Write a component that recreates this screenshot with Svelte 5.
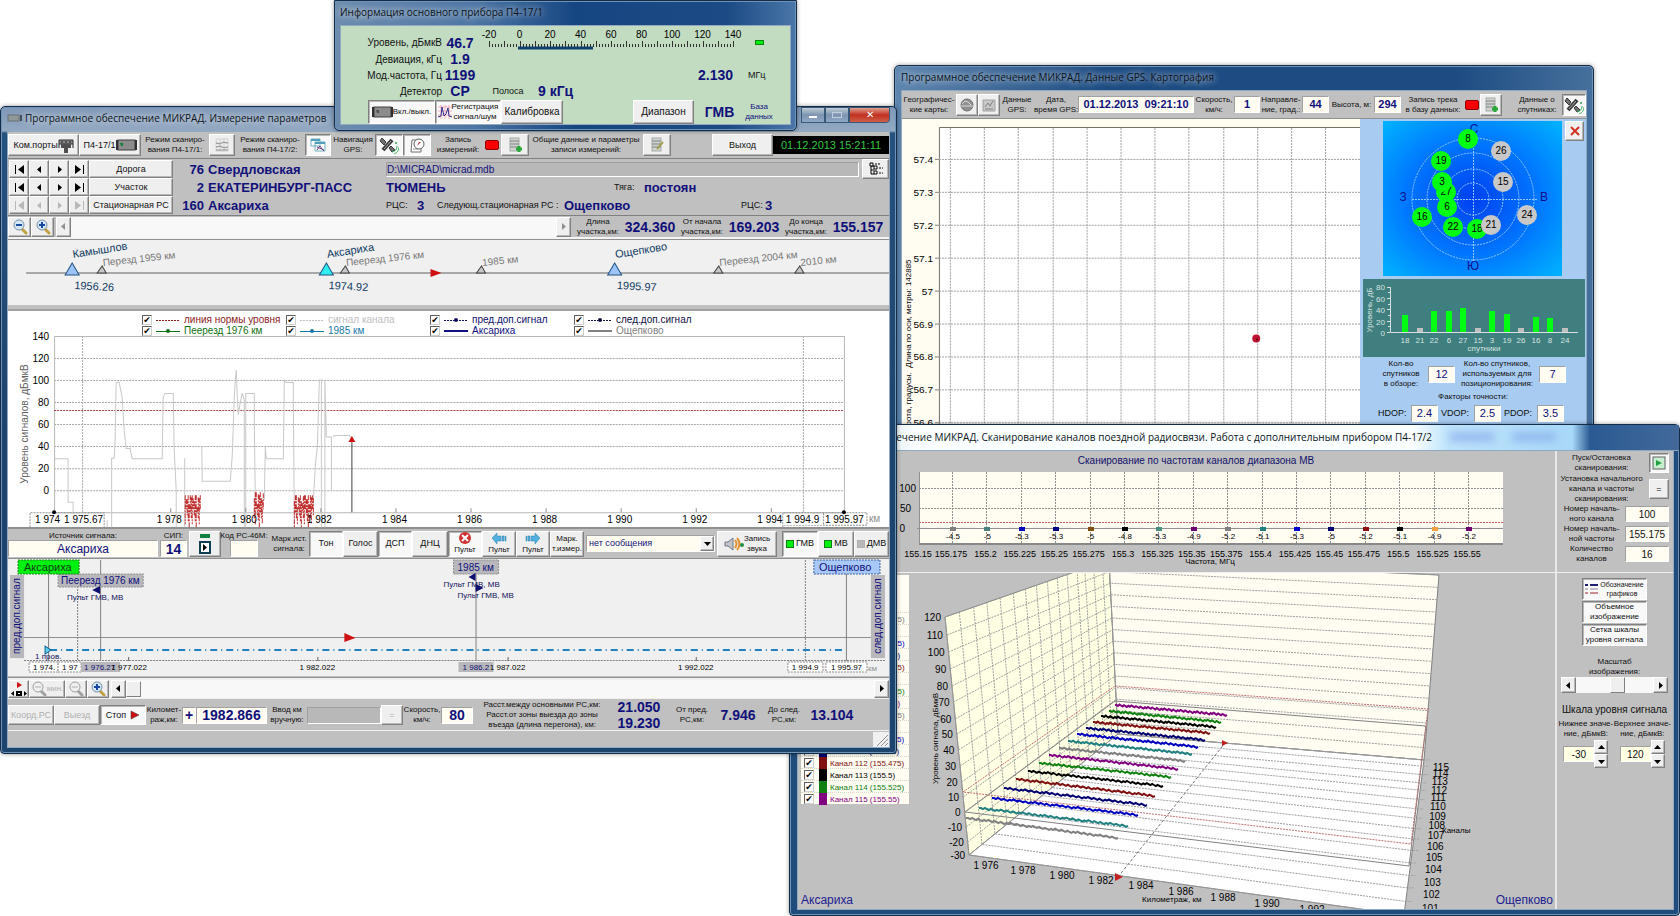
<script lang="ts">
  type Point = readonly [number, number];

  const lerp = (a: number, b: number, t: number) => a + (b - a) * t;

  // track overview
  const stations = [
    {x: 72, name: 'Камышлов', km: '1956.26', fill: '#9cc4f8'},
    {x: 326, name: 'Аксариха', km: '1974.92', fill: '#2ff0f0'},
    {x: 614, name: 'Ощепково', km: '1995.97', fill: '#9cc4f8'},
  ];
  const crossings = [
    {x: 102, name: 'Перезд 1959 км'},
    {x: 345, name: 'Пеерезд 1976 км'},
    {x: 481, name: '1985 км'},
    {x: 718, name: 'Переезд 2004 км'},
    {x: 799, name: '2010 км'},
  ];

  // level chart
  const legend = [
    {name: 'линия нормы уровня', color: '#8b1a1a', dash: '2 1', width: 1, dot: false},
    {name: 'сигнал канала', color: '#c0c0c0', dash: '2 1', width: 1, dot: false},
    {name: 'пред.доп.сигнал', color: '#10106a', dash: '2 1', width: 1, dot: true},
    {name: 'след.доп.сигнал', color: '#101040', dash: '2 1', width: 1, dot: true},
    {name: 'Пеерезд 1976 км', color: '#107010', dash: '', width: 1, dot: true},
    {name: '1985 км', color: '#1878a8', dash: '', width: 1, dot: true},
    {name: 'Аксариха', color: '#101080', dash: '', width: 2, dot: false},
    {name: 'Ощепково', color: '#808080', dash: '', width: 2, dot: false},
  ];
  const levels = [140, 120, 100, 80, 60, 40, 20, 0];
  const kmTicks = [1978, 1980, 1982, 1984, 1986, 1988, 1990, 1992, 1994];
  const signal =
    'M54 458.5H68V502H73V512 M107 520V527 M111.5 527V458H114L115 440L116 382.5H119L122 397L124 430L126 448.5H130L132 458.5H162L163 397L165 393.5H173L174 450L176 490V527 M184.5 527V458 M201.5 446L202 481H230L232 455L234 397L235 380L236 370L237 397L238 415L240 402L242 393L244 400V527 M245.5 527V393.5H254V420L255 500 M264 500L265 447L266 458.5H283L284 380L286 382.5H293V400L294 527 M313 500L315 465L317 447L319 380H321V527 M324.5 527V380L326 437H331V490 M333 437L334 435.5H349L351 438';
  const bursts = [
    {from: 185, to: 200, top: 495},
    {from: 254, to: 263, top: 492},
    {from: 294, to: 313, top: 495},
  ].map(({from, to, top}) => {
    let d = '';
    for (let x = from; x <= to; x += 1) {
      d += `M${x} ${top + ((x * 7) % 5) * ((x * 3) % 4)}V${527 - ((x * 5) % 7) * 3}`;
    }
    return d;
  });

  // GPS window
  const latitudes = ['57.4', '57.3', '57.2', '57.1', '57', '56.9', '56.8', '56.7', '56.6'];
  const satellites = [
    {id: 8, x: 1468, y: 139, used: true},
    {id: 26, x: 1501, y: 151, used: false},
    {id: 19, x: 1441, y: 161, used: true},
    {id: 27, x: 1446, y: 192, used: true},
    {id: 3, x: 1442, y: 182, used: true},
    {id: 15, x: 1503, y: 182, used: false},
    {id: 6, x: 1447, y: 207, used: true},
    {id: 16, x: 1422, y: 217, used: true},
    {id: 22, x: 1453, y: 227, used: true},
    {id: 18, x: 1477, y: 229, used: true},
    {id: 21, x: 1491, y: 225, used: false},
    {id: 24, x: 1527, y: 215, used: false},
  ];
  const bars = [
    [18, 17], [21, 4], [22, 21], [6, 21], [27, 24], [15, 4],
    [3, 21], [19, 18], [26, 4], [16, 15], [8, 14], [24, 4],
  ];

  // scan window
  const scan = [
    ['-4.5', '#808080'], ['-5', '#4a8080'], ['-5.3', '#0000c0'], ['-5.3', '#000080'],
    ['-5', '#805010'], ['-4.8', '#000'], ['-5.3', '#4a9080'], ['-4.9', '#700070'],
    ['-5.2', '#808080'], ['-5.1', '#208080'], ['-5.3', '#0000d0'], ['-5', '#000070'],
    ['-5.2', '#901010'], ['-5.1', '#000'], ['-4.9', '#f0a040'], ['-5.2', '#700070'],
  ];
  const palette = ['#808080', '#208080', '#0000c0', '#000070', '#801010', '#000', '#108010', '#800080'];
  const channels = Array.from({length: 16}, (_, i) => ({
    id: 100 + i,
    freq: (155175 + i * 25) / 1000,
    color: palette[i % 8],
  }));
  const starts: Point[] = [
    [965, 816], [978, 806], [991, 796], [1003, 786], [1015, 777], [1027, 769], [1038, 761], [1048, 753],
    [1058, 746], [1067, 739], [1076, 732], [1085, 726], [1092, 720], [1100, 714], [1108, 709], [1114, 703],
  ];
  const ends: Point[] = [
    [1117, 836], [1127, 824], [1137, 813], [1146, 803], [1154, 794], [1162, 784], [1170, 775], [1177, 767],
    [1184, 759], [1191, 752], [1197, 745], [1204, 738], [1209, 731], [1215, 725], [1220, 720], [1226, 713],
  ];
  const depth = starts.map(([x]) => (x - 965) / 149);
  const scaleY = [615, 633, 650, 667, 684, 700, 717, 732, 748, 764, 780, 795, 810, 825, 840, 853];
  const steps = scaleY.map((y, i) => {
    const t = i / 15;
    return {
      level: 120 - i * 10,
      front: [lerp(944, 968, (y - 615) / 238), y],
      back: [lerp(1108, 1117, t), lerp(558, 732, t)],
      right: [lerp(1438, 1423, t), lerp(573, 758, t)],
    };
  });
  const noisy = ([x1, y1]: Point, [x2, y2]: Point) => {
    let d = `M${x1} ${y1}`;
    for (let i = 1; i < 75; i += 1) {
      const t = i / 75;
      d += `L${lerp(x1, x2, t).toFixed(1)} ${(lerp(y1, y2, t) + (((i * 37) % 11) - 5) / 5).toFixed(1)}`;
    }
    return d + `L${x2} ${y2}`;
  };
  const kmAxis: [string, number, number][] = [
    ['1 976', 985, 867], ['1 978', 1022, 872], ['1 980', 1061, 877], ['1 982', 1100, 882],
    ['1 984', 1140, 887], ['1 986', 1180, 893], ['1 988', 1222, 899], ['1 990', 1266, 905], ['1 992', 1311, 911],
  ];
  const navRows = ['Дорога', 'Участок', 'Стационарная РС'];
</script>

{#snippet lens(sign: string, muted: boolean)}
  <svg class="icon" width="16" height="16" viewBox="0 0 16 16" aria-hidden="true">
    <path d="M10 10l4 4" stroke={muted ? '#a0a0a0' : '#c0a040'} stroke-width="3" stroke-linecap="round" />
    <circle cx="7" cy="6" r="5" fill={muted ? '#f0f0f0' : '#d4e8f8'} stroke={muted ? '#a0a0a0' : '#7890a8'} />
    <path d={sign === '+' ? 'M4 6h6M7 3v6' : 'M4 6h6'} stroke={muted ? '#b0b0b0' : '#1848a0'} stroke-width={muted ? 1 : 2} />
  </svg>
{/snippet}

{#snippet satellite()}
  <svg class="icon" width="20" height="18" viewBox="0 0 20 18" aria-hidden="true">
    <path d="M3 2l4 4-2 3-4-4zM12 10l4 4-3 2-3-4z" fill="#707070" stroke="#383838" />
    <path d="M4 14l9-10" stroke="#383838" stroke-width="4" />
    <path d="M5 13l7-8" stroke="#b0b0b0" />
    <path d="M13 16q5-1 5-6M15 18q5-2 5-7" fill="none" stroke="#40b060" />
    <circle cx="17" cy="7" r="1" fill="#30a050" />
  </svg>
{/snippet}

{#snippet database(mark: string)}
  <svg class="icon" width="16" height="18" viewBox="0 0 16 18" aria-hidden="true">
    <rect x="3" y="2" width="9" height="13" fill="#d0d4d0" stroke="#a8aca8" />
    <path d="M3 5h9M3 8h9M3 11h9" stroke="#808480" />
    {#if mark === 'add'}
      <path d="M12 10v6M9 13h6" stroke="#28a838" stroke-width="3" />
    {:else}
      <path d="M8 13l6-7" stroke="#a0a050" stroke-width="2" />
    {/if}
  </svg>
{/snippet}

{#snippet device(color: string)}
  <svg class="icon" width="21" height="12" viewBox="0 0 21 12" aria-hidden="true">
    <rect x="2" y="1" width="17" height="10" fill="#8c8c8c" stroke="#404040" />
    <path d="M1 1v10M20 1v10" stroke="#303030" stroke-width="2" />
    <path d="M4 4h3v3h-2z" fill={color} />
  </svg>
{/snippet}

{#snippet arrow(dir: string, color: string = '#000')}
  <svg class="icon" width="9" height="9" viewBox="0 0 9 9" aria-hidden="true">
    <path
      fill={color}
      d={{left: 'M6 1v7L2 4.5z', right: 'M3 1v7L7 4.5z', up: 'M1 6h7L4.5 2z', down: 'M1 3h7L4.5 7z', first: 'M0 0h1v9H0zM9 0v9L3 4.5z', last: 'M8 0h1v9H8zM0 0v9L6 4.5z'}[dir]}
    />
  </svg>
{/snippet}

<main class="desktop">
  <section class="window gps" aria-label="Картография">
    <header class="title"><h1>Программное обеспечение МИКРАД. Данные GPS. Картография</h1></header>
    <div class="client">
      <div class="gps-bar">
        <span class="cap">Географичес-<br />кие карты:</span>
        <button class="btn" aria-label="Карта мира">
          <svg class="icon" width="16" height="16" viewBox="0 0 16 16" aria-hidden="true">
            <circle cx="8" cy="8" r="6" fill="#909090" stroke="#707070" />
            <path d="M3 7l3-3 3 1 3 3M2 9h12" stroke="#d8d8d8" fill="none" />
          </svg>
        </button>
        <button class="btn" aria-label="Сохранить">
          <svg class="icon" width="16" height="16" viewBox="0 0 16 16" aria-hidden="true">
            <path d="M2 3h12v11H2z" fill="#c8c8c8" stroke="#a0a0a0" />
            <path d="M4 10l3-4 2 3 3-5M4 12h8" stroke="#808080" fill="none" />
          </svg>
        </button>
        <span class="cap">Данные<br />GPS:</span>
        <span class="cap">Дата,<br />время GPS:</span>
        <output class="field">01.12.2013&nbsp; 09:21:10</output>
        <span class="cap">Скорость,<br />км/ч:</span>
        <output class="field">1</output>
        <span class="cap">Направле-<br />ние, град.:</span>
        <output class="field">44</output>
        <span class="cap">Высота, м:</span>
        <output class="field">294</output>
        <span class="cap">Запись трека<br />в базу данных:</span>
        <i class="lamp red"></i>
        <button class="btn" aria-label="Запись трека">{@render database('add')}</button>
        <span></span>
        <span class="cap">Данные о<br />спутниках:</span>
        <button class="btn down" aria-label="Данные о спутниках">{@render satellite()}</button>
      </div>
      <div class="gps-body">
        <svg class="map" viewBox="901 119 459 307" aria-label="Карта">
          <rect x="938" y="127" width="422" height="300" fill="#fff" />
          <path d="M938.5 427V127.5H1360" fill="none" stroke="#707060" />
          <g stroke="#a0a0a0" stroke-dasharray="2 1">
            {#each Array(12) as _, i}
              <path d="M{Math.round(949 + i * 34.2)}.5 128V427" />
            {/each}
            {#each latitudes as _, i}
              <path d="M938 {159 + i * 33}.5H1360" />
            {/each}
          </g>
          <g class="axis" text-anchor="end">
            {#each latitudes as lat, i}
              <path d="M934 {159 + i * 33}.5h4" stroke="#808080" />
              <text x="932" y={163 + i * 33}>{lat}</text>
            {/each}
          </g>
          <text class="tiny" transform="translate(910 438) rotate(-90)">Широта, градусы.&nbsp; Длина по оси, метры: 142885</text>
          <circle cx="1256" cy="339" r="4" fill="#c01030" />
          <circle cx="1257" cy="340" r="1" fill="#400" />
        </svg>
        <div class="sats">
          <div class="sky-row">
            <svg viewBox="1383 121 179 155" aria-label="Спутники">
              <defs>
                <radialGradient id="sky" r="0.75">
                  <stop offset="0" stop-color="#0040f0" />
                  <stop offset="0.5" stop-color="#0078ff" />
                  <stop offset="1" stop-color="#00bcff" />
                </radialGradient>
              </defs>
              <rect x="1383" y="121" width="179" height="155" fill="url(#sky)" />
              <g fill="none" stroke="#90c8ff" stroke-dasharray="2 1">
                {#each [16, 30, 46, 61] as r}
                  <circle cx="1473" cy="199" {r} />
                {/each}
                <path d="M1412 199.5h125M1473.5 136v126" />
              </g>
              <g class="compass" text-anchor="middle">
                <text x="1474" y="133">С</text>
                <text x="1473" y="270">Ю</text>
                <text x="1403" y="201">З</text>
                <text x="1544" y="201">В</text>
              </g>
              <g class="axis" text-anchor="middle">
                {#each satellites as sat}
                  <circle cx={sat.x} cy={sat.y} r="10" fill={sat.used ? '#00ff10' : '#c8c8c8'} />
                  <text x={sat.x} y={sat.y + 3}>{sat.id}</text>
                {/each}
              </g>
            </svg>
            <button class="btn close-sats" aria-label="Закрыть">
              <svg class="icon" width="10" height="10" viewBox="0 0 10 10" aria-hidden="true">
                <path d="M1 1l8 8M9 1l-8 8" stroke="#d03020" stroke-width="2" />
              </svg>
            </button>
          </div>
          <svg class="bars" viewBox="1363 279 222 78" aria-label="Уровень сигнала спутников">
            <rect x="1363" y="279" width="222" height="78" fill="#3f7f7f" />
            <path d="M1390.5 287V332.5H1578M1387 287.5h3M1387 298.5h3M1387 309.5h3M1387 321.5h3M1387 332.5h3M1388 292.5h2M1388 304.5h2M1388 315.5h2M1388 326.5h2" fill="none" stroke="#d8e0e0" />
            <g class="level">
              {#each [80, 60, 40, 20, 0] as v, i}
                <text x="1385" y={290 + i * 11.5} text-anchor="end">{v}</text>
              {/each}
            </g>
            <g class="ids" text-anchor="middle">
              {#each bars as [id, h], i}
                <rect x={1402 + Math.round(i * 14.5)} y={332 - h} width="6" height={h} fill={h > 4 ? '#00ff10' : '#c0c0c0'} />
                <text x={1405 + Math.round(i * 14.5)} y="343">{id}</text>
              {/each}
              <text x="1484" y="351">спутники</text>
            </g>
            <text class="ids" text-anchor="middle" transform="translate(1372 310) rotate(-90)">Уровень, дБ</text>
          </svg>
          <div class="counts">
            <span class="cap">Кол-во<br />спутников<br />в обзоре:</span>
            <output class="field plain">12</output>
            <span class="cap">Кол-во спутников,<br />используемых для<br />позиционирования:</span>
            <output class="field plain">7</output>
          </div>
          <div class="cap factors">Факторы точности:</div>
          <div class="dops">
            <span>HDOP:</span><output class="field plain">2.4</output>
            <span>VDOP:</span><output class="field plain">2.5</output>
            <span>PDOP:</span><output class="field plain">3.5</output>
          </div>
        </div>
      </div>
    </div>
  </section>

  <section class="window scan" aria-label="Сканирование каналов">
    <header class="title">
      <h1>Программное обеспечение МИКРАД. Сканирование каналов поездной радиосвязи. Работа с дополнительным прибором П4-17/2</h1>
      <i class="haze"></i><i class="haze"></i>
    </header>
    <div class="client scan-grid">
      <svg class="spectrum" viewBox="797 451 757 117" aria-label="Сканирование по частотам">
        <text x="1195" y="464" text-anchor="middle" class="navy">Сканирование по частотам каналов диапазона МВ</text>
        <rect x="918" y="472" width="584" height="73" fill="#fffcf2" />
        <g stroke="#909090" stroke-dasharray="2 1">
          {#each scan as _, i}
            <path d="M{Math.round(951 + i * 34.4)}.5 472V545" />
          {/each}
          <path d="M918 488.5H1502M918 508.5H1502" />
        </g>
        <path d="M918 522.5H1502" stroke="#c06060" stroke-dasharray="2 1" />
        <path d="M918.5 472V545M916 528.5H1502" stroke="#909090" />
        <path d="M918 544H1502" stroke="#888" stroke-width="2" />
        <g class="axis" text-anchor="end">
          <text x="915" y="492">100</text>
          <text x="910" y="512">50</text>
          <text x="904" y="532">0</text>
        </g>
        <g class="freq" text-anchor="middle">
          <text x="917" y="557">155.15</text>
          {#each scan as [value, color], i}
            <rect x={949 + Math.round(i * 34.4)} y="527" width="6" height="4" fill={color} />
            <text class="tiny" x={952 + i * 34.4} y="539">{value}</text>
            <text x={950 + i * 34.4} y="557">{channels[i].freq}</text>
          {/each}
          <text class="tiny" x="1209" y="564">Частота, МГц</text>
        </g>
      </svg>
      <div class="scan-set">
        <span class="cap">Пуск/Остановка<br />сканирования:</span>
        <button class="btn down" aria-label="Пуск">
          <svg class="icon" width="14" height="14" viewBox="0 0 14 14" aria-hidden="true">
            <rect x="1" y="1" width="12" height="12" fill="#c8f0d0" stroke="#606060" />
            <path d="M4 4v6l6-3z" fill="#20a040" />
          </svg>
        </button>
        <span class="cap">Установка начального<br />канала и частоты<br />сканирования:</span>
        <button class="btn">=</button>
        <label class="cap" for="first-channel">Номер началь-<br />ного канала</label>
        <input id="first-channel" class="wide" value="100" />
        <label class="cap" for="first-freq">Номер началь-<br />ной частоты</label>
        <input id="first-freq" class="wide" value="155.175" />
        <label class="cap" for="channel-count">Количество<br />каналов</label>
        <input id="channel-count" class="wide" value="16" />
      </div>
      <div class="volume">
        <svg viewBox="797 571 757 338" aria-label="Объемный график уровня сигнала">
          <path d="M944 615L1108 558L1117 732L968 853Z" fill="#ffffe4" stroke="#808080" />
          <path d="M1108 558L1438 573L1423 758L1117 732Z" fill="#fffcf2" stroke="#808080" />
          <path d="M968 853L1117 732L1423 758L1403 913Z" fill="#fff" stroke="#808080" />
          <g fill="none" stroke="#a0a0a0" stroke-dasharray="2 1">
            {#each steps as s}
              <path d="M{s.front[0]} {s.front[1]}L{s.back[0]} {s.back[1]}L{s.right[0]} {s.right[1]}" />
            {/each}
            {#each depth as t}
              <path d="M{lerp(944, 1108, t)} {lerp(615, 558, t)}L{lerp(968, 1117, t)} {lerp(853, 732, t)}L{lerp(1403, 1423, t)} {lerp(913, 758, t)}h6" />
            {/each}
          </g>
          <path d="M964 810L1114 699L1425 724L1408 864Z" fill="none" stroke="#808080" />
          <path d="M962 790L1114 684L1427 707L1410 842Z" fill="none" stroke="#c07070" stroke-dasharray="2 1" />
          <path d="M1117 875L1224 741" stroke="#707080" stroke-dasharray="3 2" />
          {#each channels as ch, i}
            <path d={noisy(starts[i], ends[i])} fill="none" stroke={ch.color} stroke-width="2" />
          {/each}
          <path d="M1114 871v8l8-4zM1221 738v6l6-3z" fill="#c02020" />
          <g class="axis">
            {#each steps as s}
              <text x={s.front[0] - 4} y={s.front[1] + 4} text-anchor="end">{s.level}</text>
            {/each}
            {#each channels.slice(1) as ch, i}
              <text x={lerp(1420, 1432, depth[i + 1])} y={lerp(923, 769, depth[i + 1])}>{ch.id}</text>
            {/each}
            {#each kmAxis as [km, x, y]}
              <text {x} {y} text-anchor="middle">{km}</text>
            {/each}
          </g>
          <g class="tiny">
            <text x="1441" y="831">Каналы</text>
            <text x="1141" y="900">Километраж, км</text>
            <text transform="translate(937 782) rotate(-90)">Уровень сигнала, дБмкВ</text>
          </g>
          <g class="place">
            <text x="800" y="902">Аксариха</text>
            <text x="1552" y="902" text-anchor="end">Ощепково</text>
          </g>
        </svg>
        <div class="channels">
          {#each channels as ch}
            <label style="color: {ch.color}">
              <input type="checkbox" checked />
              <i style="background: {ch.color}"></i>
              <span>Канал {ch.id} ({ch.freq})</span>
            </label>
          {/each}
        </div>
      </div>
      <div class="scan-tools">
        <div class="toggles">
          <button class="btn down">
            <svg class="icon" width="13" height="12" viewBox="0 0 13 12" aria-hidden="true">
              <path d="M0 2h3M5 2h8" stroke="#202070" stroke-width="2" />
              <path d="M0 6h3M5 6h8" stroke="#9080a0" />
              <path d="M0 10h3M5 10h8" stroke="#a02030" />
            </svg>
            <span>Обозначение<br />графиков</span>
          </button>
          <button class="btn down">Объемное<br />изображение</button>
          <button class="btn down">Сетка шкалы<br />уровня сигнала</button>
        </div>
        <label class="cap" for="zoom">Масштаб<br />изображения:</label>
        <div class="scroll">
          <button class="btn" aria-label="Меньше">{@render arrow('left')}</button>
          <input id="zoom" type="range" value="55" />
          <button class="btn" aria-label="Больше">{@render arrow('right')}</button>
        </div>
        <h2>Шкала уровня сигнала</h2>
        <div class="limits">
          <label class="cap" for="low">Нижнее значе-<br />ние, дБмкВ:</label>
          <label class="cap" for="high">Верхнее значе-<br />ние, дБмкВ:</label>
          {#each [['low', '-30'], ['high', '120']] as [id, value]}
            <div class="spin">
              <input {id} {value} />
              <div>
                <button class="btn" aria-label="Больше">{@render arrow('up')}</button>
                <button class="btn" aria-label="Меньше">{@render arrow('down')}</button>
              </div>
            </div>
          {/each}
        </div>
      </div>
    </div>
  </section>

  <section class="window meter-main" aria-label="Измерение параметров">
    <header class="title">
      <svg class="icon" width="16" height="8" viewBox="0 0 16 8" aria-hidden="true">
        <rect x="1" y="1" width="11" height="6" fill="#909898" stroke="#687078" />
        <path d="M14 1v6" stroke="#404850" stroke-width="2" />
      </svg>
      <h1>Программное обеспечение МИКРАД. Измерение параметров</h1>
      <div class="sys">
        <button aria-label="Свернуть"><i class="min"></i></button>
        <button aria-label="Развернуть"><i class="max"></i></button>
        <button class="shut" aria-label="Закрыть окно">✕</button>
      </div>
    </header>
    <div class="client">
      <div class="tools">
        <button class="btn">Ком.порты
          <svg class="icon" width="16" height="15" viewBox="0 0 16 15" aria-hidden="true">
            <path d="M1 2h14v4H1z" fill="#888" stroke="#303030" />
            <path d="M3 6h10v4H3zM6 10h4v5H6z" fill="#505050" />
            <path d="M1 6v4M15 6v4M4 3v2M8 3v2M12 3v2" stroke="#202020" />
          </svg>
        </button>
        <button class="btn">П4-17/1{@render device('#108040')}</button>
        <span class="cap">Режим сканиро-<br />вания П4-17/1:</span>
        <button class="btn" aria-label="Режим сканирования П4-17/1">
          <svg class="icon" width="16" height="16" viewBox="0 0 16 16" aria-hidden="true">
            <path d="M2 2h12v12H2zM2 6h12M2 10h12M6 2v12M10 2v12" stroke="#d0d0d0" fill="none" />
            <path d="M2 6l4 1 3-2 5 1M2 10l4-1 4 2 4-1M2 13h12" stroke="#909090" fill="none" />
          </svg>
        </button>
        <span class="cap">Режим сканиро-<br />вания П4-17/2:</span>
        <button class="btn down" aria-label="Режим сканирования П4-17/2">
          <svg class="icon" width="18" height="16" viewBox="0 0 18 16" aria-hidden="true">
            <path d="M2 2h9v7H2zM6 5h10v9H6z" fill="#fff" stroke="#70b0c0" />
            <path d="M2 3h9M6 6h10" stroke="#50a0c0" stroke-width="2" />
            <path d="M8 13l3-4 2 3 2 2M8 10l7 3" stroke="#704080" fill="none" />
          </svg>
        </button>
        <span class="cap">Навигация<br />GPS:</span>
        <button class="btn down" aria-label="Навигация">{@render satellite()}</button>
        <button class="btn down" aria-label="Карта">
          <svg class="icon" width="18" height="17" viewBox="0 0 18 17" aria-hidden="true">
            <path d="M4 3h9v12H3z" fill="#fff" stroke="#707070" />
            <path d="M5 12h5" stroke="#909090" />
            <circle cx="11" cy="7" r="5" fill="#fff" stroke="#606060" />
            <path d="M9 9l2-4 2 0z" fill="#c03040" />
          </svg>
        </button>
        <span class="cap">Запись<br />измерений:</span>
        <i class="lamp red"></i>
        <button class="btn" aria-label="Запись измерений">{@render database('add')}</button>
        <span class="cap">Общие данные и параметры<br />записи измерений:</span>
        <button class="btn" aria-label="Параметры записи">{@render database('edit')}</button>
        <span></span>
        <button class="btn">Выход</button>
        <time class="clock">01.12.2013 15:21:11</time>
      </div>

      <div class="route">
        <div class="nav">
          {#each navRows as row, i}
            {#each ['first', 'left', 'right', 'last'] as dir}
              <button class="btn" disabled={i === 2} aria-label={dir}>{@render arrow(dir, i === 2 ? '#b8b8b8' : '#000')}</button>
            {/each}
            <button class="btn">{row}</button>
          {/each}
        </div>
        <div class="facts">
          <b class="num">76</b><b>Свердловская</b>
          <div class="path">
            <input aria-label="База данных" value="D:\MICRAD\micrad.mdb" />
            <button class="btn" aria-label="Структура">
              <svg class="icon" width="14" height="14" viewBox="0 0 14 14" aria-hidden="true">
                <path d="M2 1v11h3M2 4h3M2 8h3" stroke="#000" fill="none" />
                <path d="M1 1h3v3H1zM5 4h3v3H5zM5 9h3v3H5z" fill="#fff" stroke="#000" />
                <path d="M6 2h6M10 6h4M10 11h4" stroke="#000" stroke-dasharray="2 1" />
              </svg>
            </button>
          </div>
          <b class="num">2</b><b>ЕКАТЕРИНБУРГ-ПАСС</b>
          <div class="fact-two"><b>ТЮМЕНЬ</b><span>Тяга:</span><b>постоян</b></div>
          <b class="num">160</b><b>Аксариха</b>
          <div class="fact-three">
            <span>РЦС:</span><b>3</b><span>Следующ.стационарная РС :</span><b>Ощепково</b><span>РЦС:</span><b>3</b>
          </div>
        </div>
      </div>

      <div class="lengths">
        <button class="btn" aria-label="Уменьшить">{@render lens('-', false)}</button>
        <button class="btn" aria-label="Увеличить">{@render lens('+', false)}</button>
        <div class="scroll idle">
          <button class="btn" aria-label="Влево">{@render arrow('left', '#909090')}</button>
          <input type="range" disabled aria-label="Прокрутка участка" />
          <button class="btn" aria-label="Вправо">{@render arrow('right', '#909090')}</button>
        </div>
        <span class="cap">Длина<br />участка,км:</span><b class="big">324.360</b>
        <span class="cap">От начала<br />участка,км:</span><b class="big">169.203</b>
        <span class="cap">До конца<br />участка,км:</span><b class="big">155.157</b>
      </div>

      <svg class="panel" viewBox="8 240 880 65" aria-label="Схема участка">
        <path d="M26 273H888" stroke="#a8a8a8" stroke-width="2" />
        {#each crossings as c}
          <path d="M{c.x} 266l4 7h-9z" fill="#c8c8c8" stroke="#404040" />
          <text class="cross" transform="translate({c.x + 1} 266) rotate(-6)">{c.name}</text>
        {/each}
        {#each stations as s}
          <path d="M{s.x} 263l7 12h-14z" fill={s.fill} stroke="#205080" />
          <text class="station" transform="translate({s.x + 1} 258) rotate(-9)">{s.name}</text>
          <text class="station" transform="translate({s.x + 2} 289) rotate(3)">{s.km}</text>
        {/each}
        <path d="M430 269v8l11-4z" fill="#d01010" />
      </svg>

      <div class="chart">
        <div class="legend">
          {#each legend as item}
            <label style="color: {item.color}">
              <input type="checkbox" checked />
              <svg width="24" height="8" viewBox="0 0 24 8" aria-hidden="true">
                <path d="M0 {item.width === 1 ? 4.5 : 4}h24" stroke={item.color} stroke-width={item.width} stroke-dasharray={item.dash} />
                {#if item.dot}<circle cx="12" cy="4" r="2" fill={item.color} />{/if}
              </svg>
              <span>{item.name}</span>
            </label>
          {/each}
        </div>
        <svg class="plot" viewBox="8 336 880 191" aria-label="Уровень сигналов">
          <g stroke="#a8a8a8" stroke-dasharray="2 1">
            {#each levels.slice(1) as _, i}
              <path d="M54 {358 + i * 22}.5H843" />
            {/each}
            <path d="M82.5 336V512M802.5 336V512" />
          </g>
          <path d="M54.5 336.5H843.5V512.5H54.5Z" fill="none" stroke="#b8b8b8" />
          <path d="M54 410.5H843" stroke="#a04848" stroke-dasharray="2 1" />
          <path d={signal} fill="none" stroke="#c8c8c8" />
          {#each bursts as d}
            <path {d} stroke="#c03030" stroke-dasharray="5 1 2 1" />
          {/each}
          <path d="M351.5 442V512" stroke="#404040" />
          <path d="M348 442h7l-3.5-6z" fill="#d01010" />
          <path d="M30 527V512.5H104V527M782 527V512.5H866V525H782M822.5 513V525" fill="none" stroke="#909090" stroke-dasharray="2 1" />
          <circle cx="54" cy="512" r="2" />
          <circle cx="843" cy="512" r="2" />
          <g class="axis">
            {#each levels as level, i}
              <text x="49" y={340 + i * 22} text-anchor="end">{level}</text>
            {/each}
            <text x="35" y="523">1 974</text>
            <text x="64" y="523">1 975.67</text>
            {#each kmTicks as km, i}
              <path d="M{170 + i * 75}.5 508v4" stroke="#909090" />
              <text x={169 + i * 75} y="523" text-anchor="middle">1 {km - 1000}</text>
            {/each}
            <rect x="783" y="514" width="38" height="11" fill="#fff" />
            <text x="785" y="523">1 994.9</text>
            <text x="824" y="523">1 995.97</text>
            <text x="868" y="522" fill="#909090">км</text>
          </g>
          <text class="ylabel" text-anchor="middle" transform="translate(28 424) rotate(-90)">Уровень сигналов, дБмкВ</text>
        </svg>
      </div>

      <div class="source">
        <div class="stack"><span class="cap">Источник сигнала:</span><output class="field name">Аксариха</output></div>
        <div class="stack"><span class="cap">СИП:</span><output class="field sip">14</output></div>
        <button class="btn" aria-label="Воспроизвести">
          <svg class="icon" width="16" height="22" viewBox="0 0 16 22" aria-hidden="true">
            <path d="M3 1h10v4H3z" fill="#108040" />
            <path d="M3 9h10v11H3z" fill="#fff" stroke="#104050" stroke-width="2" />
            <path d="M6 11v7l4-3.5z" />
          </svg>
        </button>
        <div class="stack code"><label class="cap" for="code">Код РС-46М:</label><input id="code" /></div>
        <span class="cap">Марк.ист.<br />сигнала:</span>
        <button class="btn down">Тон</button>
        <button class="btn">Голос</button>
        <button class="btn down">ДСП</button>
        <button class="btn">ДНЦ</button>
        <button class="btn tall down">
          <svg class="icon" width="14" height="13" viewBox="0 0 14 13" aria-hidden="true">
            <circle cx="7" cy="6" r="6" fill="#d03030" />
            <path d="M4 3l6 6M10 3l-6 6" stroke="#fff" stroke-width="2" />
          </svg>Пульт</button>
        <button class="btn tall">
          <svg class="icon" width="16" height="13" viewBox="0 0 16 13" aria-hidden="true">
            <path d="M1 6l5-5v3h4v5H6v3zM11 4h2v5h-2zM14 4h1v5h-1z" fill="#50b0e0" stroke="#3080a8" stroke-width=".5" />
          </svg>Пульт</button>
        <button class="btn tall">
          <svg class="icon" width="16" height="13" viewBox="0 0 16 13" aria-hidden="true">
            <path d="M15 6l-5-5v3H6v5h4v3zM3 4h2v5H3zM1 4h1v5H1z" fill="#50b0e0" stroke="#3080a8" stroke-width=".5" />
          </svg>Пульт</button>
        <button class="btn small">Марк.<br />т.измер.</button>
        <div class="pick">
          <select aria-label="Сообщение"><option>нет сообщения</option></select>
          <span class="btn">{@render arrow('down')}</span>
        </div>
        <button class="btn small">
          <svg class="icon" width="20" height="14" viewBox="0 0 20 14" aria-hidden="true">
            <path d="M1 5h3l5-4v12L4 9H1z" fill="#c0c4c8" stroke="#707880" />
            <path d="M11 3q3 4 0 8M13 1q5 6 0 12" fill="none" stroke="#e09030" stroke-width="2" />
            <circle cx="18" cy="8" r="2" fill="#209040" />
          </svg>
          <span>Запись<br />звука</span>
        </button>
        <span></span>
        <button class="btn down"><i class="lamp"></i>ГМВ</button>
        <button class="btn"><i class="lamp"></i>МВ</button>
        <button class="btn"><i class="lamp off"></i>ДМВ</button>
      </div>

      <svg class="panel" viewBox="8 559 880 117" aria-label="Перегон">
        <path d="M24 637.5H872" stroke="#909090" />
        <path d="M48.5 574V661M100.5 560V661M475.5 574V661M845.5 574V661" stroke="#808080" />
        <path d="M77.5 586V661M804.5 560V661M24 660.5H884" stroke="#808080" stroke-dasharray="2 1" />
        <path d="M50 650H845" stroke="#2080c0" stroke-width="2" stroke-dasharray="7 4 1 4" />
        <path d="M45 646v8l6-4z" fill="#60d0f0" stroke="#106090" />
        <path d="M344 633v9l11-4z" fill="#d01010" />
        <g fill="#b8b8bc">
          <rect x="10" y="575" width="14" height="83" />
          <rect x="870" y="575" width="14" height="83" />
          <rect x="58" y="574" width="85" height="13" stroke="#909090" stroke-dasharray="2 1" />
          <rect x="453" y="560" width="45" height="14" stroke="#909090" stroke-dasharray="2 1" />
        </g>
        <rect x="18" y="560" width="61" height="14" fill="#00f010" stroke="#208020" stroke-dasharray="2 1" />
        <rect x="813" y="560" width="66" height="14" fill="#a8c8f8" stroke="#4060a0" stroke-dasharray="2 1" />
        <path d="M100 586v8l-8-4zM475 573v8l-7-4zM475 584v8l8-4z" fill="#101070" />
        <g class="tag">
          <text x="24" y="571" fill="#104010">Аксариха</text>
          <text x="818" y="571">Ощепково</text>
        </g>
        <g class="note">
          <text x="61" y="584">Пеерезд 1976 км</text>
          <text x="457" y="571">1985 км</text>
        </g>
        <g class="small-note">
          <text x="67" y="600">Пульт ГМВ, МВ</text>
          <text x="443" y="587">Пульт ГМВ, МВ</text>
          <text x="457" y="598">Пульт ГМВ, МВ</text>
          <text x="35" y="659">1 пров.</text>
        </g>
        <g class="side" text-anchor="middle">
          <text transform="translate(20 616) rotate(-90)">пред.доп.сигнал</text>
          <text transform="translate(880 616) rotate(-90)">след.доп.сигнал</text>
        </g>
        <path d="M128.5 657v4M317.5 657v4M507.5 657v4M695.5 657v4" stroke="#606060" />
        <g fill="#fff" stroke="#909090" stroke-dasharray="2 1">
          <rect x="29" y="662" width="29" height="10" />
          <rect x="58" y="662" width="23" height="10" />
          <rect x="787" y="662" width="35" height="10" />
          <rect x="825" y="662" width="41" height="10" />
        </g>
        <path d="M81 662h39v10H81zM458 662h35v10h-35z" fill="#b8b8bc" />
        <g class="km">
          <text x="33" y="670">1 974.</text>
          <text x="62" y="670">1 97</text>
          <text x="84" y="670" fill="#101070">1 976.27</text>
          <text x="129" y="670" text-anchor="middle">1 977.022</text>
          <text x="317" y="670" text-anchor="middle">1 982.022</text>
          <text x="462" y="670" fill="#101070">1 986.2</text>
          <text x="507" y="670" text-anchor="middle">1 987.022</text>
          <text x="695" y="670" text-anchor="middle">1 992.022</text>
          <text x="791" y="670">1 994.9</text>
          <text x="830" y="670">1 995.97</text>
          <text x="867" y="671" fill="#909090">км</text>
        </g>
      </svg>

      <div class="zoombar">
        <button class="btn" aria-label="К текущей точке">
          <svg class="icon" width="16" height="16" viewBox="0 0 16 16" aria-hidden="true">
            <path d="M6 1v6l5-3z" fill="#d01010" />
            <path d="M3 10v5l-3-2.5zM13 10v5l3-2.5zM5 10h6v5H5z" />
            <path d="M7 12h2v1H7z" fill="#fff" />
          </svg>
        </button>
        <button class="btn" disabled>{@render lens('-', true)}мин.</button>
        <button class="btn" aria-label="Уменьшить график" disabled>{@render lens('-', true)}</button>
        <button class="btn" aria-label="Увеличить график">{@render lens('+', false)}</button>
        <div class="scroll">
          <button class="btn" aria-label="Назад">{@render arrow('left')}</button>
          <input type="range" value="0" aria-label="Прокрутка перегона" />
          <button class="btn" aria-label="Вперед">{@render arrow('right')}</button>
        </div>
      </div>

      <div class="motion">
        <button class="btn" disabled>Коорд.РС</button>
        <button class="btn" disabled>Выезд</button>
        <button class="btn down go">Стоп
          <svg class="icon" width="10" height="10" viewBox="0 0 10 10" aria-hidden="true">
            <path d="M1 1v8l8-4z" fill="#d01010" stroke="#303030" stroke-width=".5" />
          </svg>
        </button>
        <span class="cap">Километ-<br />раж,км:</span>
        <output class="field big">+</output>
        <output class="field big">1982.866</output>
        <label class="cap" for="manual">Ввод км<br />вручную:</label>
        <input id="manual" disabled />
        <button class="btn" disabled>=</button>
        <span class="cap">Скорость,<br />км/ч:</span>
        <output class="field big">80</output>
        <span class="cap">Расст.между основными РС,км:<br />Расст.от зоны выезда до зоны<br />въезда (длина перегона), км:</span>
        <b class="big">21.050<br />19.230</b>
        <span class="cap">От пред.<br />РС,км:</span>
        <b class="big">7.946</b>
        <span class="cap">До след.<br />РС,км:</span>
        <b class="big">13.104</b>
      </div>
      <footer class="status">
        <svg width="16" height="15" viewBox="0 0 16 15" aria-hidden="true">
          <rect width="16" height="15" fill="#f0f0f0" />
          <path d="M4 14L15 3M8 14l7-7M12 14l3-3" stroke="#909090" />
        </svg>
      </footer>
    </div>
  </section>

  <section class="window info" aria-label="Основной прибор">
    <header class="title"><h1>Информация основного прибора П4-17/1</h1></header>
    <div class="client">
      <div class="readings">
        <span class="low">Уровень, дБмкВ</span><b class="big low">46.7</b>
        <svg viewBox="478 26 264 22" aria-label="Шкала уровня">
          <g class="axis" text-anchor="middle">
            {#each Array(9) as _, i}
              <text x={489 + i * 30.5} y="36">{i * 20 - 20}</text>
            {/each}
          </g>
          <path d="M518 46h75" stroke="#104070" stroke-width="3" />
          <g stroke="#303030">
            {#each Array(81) as _, i}
              <path d="M{Math.round(489 + i * 3.05)}.5 {i % 5 ? 42 : 39}V45" />
            {/each}
          </g>
        </svg>
        <i class="lamp flat"></i>
        <span>Девиация, кГц</span><b class="big">1.9</b>
        <span>Мод.частота, Гц</span><b class="big">1199</b>
        <div class="freq-row"><b class="big">2.130</b><span>МГц</span></div>
        <span>Детектор</span><b class="big">СР</b>
        <div class="band"><span>Полоса</span><b class="big">9 кГц</b></div>
      </div>
      <div class="actions">
        <button class="btn down small">{@render device('#505050')}Вкл./выкл.</button>
        <button class="btn down small">
          <svg class="icon" width="14" height="14" viewBox="0 0 14 14" aria-hidden="true">
            <path d="M0 2h14M0 6h14M0 10h14M3 0v14M7 0v14M11 0v14" stroke="#f0b0b8" />
            <path d="M0 12l3-1 1-9 2 9 2-2 2-6 1 8 3 1" stroke="#303090" fill="none" />
          </svg>
          <span>Регистрация<br />сигнал/шум</span>
        </button>
        <button class="btn">Калибровка</button>
        <span></span>
        <button class="btn">Диапазон</button>
        <b class="big">ГМВ</b>
        <span class="cap blue">База<br />данных</span>
      </div>
    </div>
  </section>
</main>

<style>
  :global(body) {
    background: #fff;
  }

  .desktop {
    position: relative;
    min-height: 100vh;
    overflow: hidden;
    color: #101010;
    font: 10px/11px "Liberation Sans", Arial, sans-serif;
  }

  .window {
    position: absolute;
    box-sizing: border-box;
    padding: 0 6px 5px;
    border: 1px solid #142c48;
    border-radius: 5px 5px 4px 4px;
    background: linear-gradient(90deg, #5f86ae, #1d4b82 30%, #1d4b82 80%, #46709c);
    box-shadow: inset 0 0 0 1px #6f94ba, 0 0 4px #00000066;
  }

  .gps {
    top: 65px;
    left: 894px;
    right: 86px;
  }

  .scan {
    top: 424px;
    left: 789px;
    right: 0;
    padding: 0 5px 5px 7px;
    background: linear-gradient(180deg, #f4fbff 25px, #1f4c7a 26px);
  }

  .meter-main {
    top: 106px;
    left: 0;
    right: 783px;
    background: linear-gradient(180deg, #7f98b6, #93a9c2 24px, #26527e 26px, #1d446c 50%, #1d446c);
  }

  .info {
    top: 0;
    left: 334px;
    right: 883px;
    padding: 0 5px 5px;
    border-radius: 0 0 5px 5px;
    background: linear-gradient(90deg, #6d8cae, #4e76a4 30%, #164682 52%, #1c4a84 85%, #4a76a8);
  }

  .title {
    display: flex;
    align-items: center;
    box-sizing: border-box;
    height: 24px;
    padding-bottom: 2px;
  }

  .title h1 {
    margin: 0;
    font: 10px/16px "Open Sans", "Noto Sans", sans-serif;
    color: #0c1420;
    white-space: nowrap;
    text-shadow: 0 0 6px #ffffffaa, 0 0 10px #ffffffaa;
  }

  .scan .title {
    margin: 0 -5px 0 -7px;
    padding-left: 7px;
    gap: 18px;
    height: 25px;
    background: linear-gradient(90deg, #8faec0, #fafeff 14%, #fafeff 70%, #bfe4fb 74%, #a8d8f8 88%, #2a5a92 90%, #43699a);
  }

  .haze {
    width: 44px;
    height: 8px;
    background: #8fb4ee;
    filter: blur(4px);
  }

  .title .icon {
    margin-right: 2px;
  }

  .sys {
    display: flex;
    align-self: flex-start;
    margin-left: auto;
  }

  .sys button {
    width: 24px;
    height: 16px;
    padding: 0;
    border: 1px solid #385878;
    background: linear-gradient(#c0ccd8, #7c94b0 50%, #90a8c4);
    color: #fff;
    font-size: 10px;
    line-height: 12px;
  }

  .sys .shut {
    width: 41px;
    border-radius: 0 0 4px 0;
    background: linear-gradient(#e0a090, #c03020 50%, #d06048);
  }

  .min,
  .max {
    display: inline-block;
    width: 8px;
    height: 2px;
    background: #fff;
  }

  .max {
    height: 4px;
    border: 1px solid #c0d0e0;
    background: none;
  }

  .client {
    border: 1px solid #90a8c0;
    background: #c0c0c0;
  }

  svg {
    display: block;
  }

  .icon {
    flex: none;
  }

  .btn {
    display: flex;
    align-items: center;
    justify-content: center;
    box-sizing: border-box;
    min-width: 0;
    padding: 0;
    border: 1px solid;
    border-color: #fff #808080 #808080 #fff;
    box-shadow: inset -1px -1px 0 #b8b8b8;
    background: #efefef;
    color: #101010;
    font: 9px/11px "Liberation Sans", Arial, sans-serif;
    white-space: nowrap;
  }

  .btn.down {
    border-color: #808080 #fff #fff #808080;
    box-shadow: inset 1px 1px 0 #b8b8b8;
    background: #f8f8f8;
  }

  .btn.small,
  .btn.tall {
    font-size: 8px;
    line-height: 10px;
  }

  .btn.tall {
    flex-direction: column;
  }

  .btn:disabled {
    color: #b0b0b0;
  }

  .cap {
    font-size: 8px;
    line-height: 10px;
    text-align: center;
    white-space: nowrap;
  }

  .blue {
    color: #101080;
  }

  .big {
    color: #10107a;
    font-size: 14px;
    line-height: 16px;
    font-weight: bold;
    text-align: center;
  }

  input,
  select,
  .field {
    box-sizing: border-box;
    min-width: 0;
    width: 100%;
    margin: 0;
    padding: 0;
    border: 1px solid;
    border-color: #a0a0a0 #fff #fff #a0a0a0;
    border-radius: 0;
    background: #fffcf2;
    color: #101010;
    font: 10px/11px "Liberation Sans", Arial, sans-serif;
    text-align: center;
  }

  .field {
    display: block;
    color: #10107a;
    font-size: 11px;
    line-height: 15px;
    font-weight: bold;
    white-space: nowrap;
  }

  .field.plain {
    font-weight: normal;
  }

  .field.big {
    font-size: 14px;
  }

  input[type="checkbox"] {
    appearance: none;
    flex: none;
    width: 10px;
    height: 10px;
    border: 1px solid;
    border-color: #606060 #d0d0d0 #d0d0d0 #606060;
    background: #fff;
  }

  input[type="checkbox"]:checked::before {
    content: "✔";
    display: block;
    color: #000;
    font: 9px/8px "DejaVu Sans", sans-serif;
  }

  .lamp {
    display: block;
    flex: none;
    box-sizing: border-box;
    width: 8px;
    height: 8px;
    margin-right: 2px;
    border: 1px solid #108010;
    background: #00f010;
  }

  .lamp.off {
    border-color: #b0b0b0;
    background: #b8b8b8;
  }

  .lamp.red {
    width: 14px;
    height: 10px;
    margin: 0;
    border-color: #900000;
    border-radius: 2px;
    background: #f80000;
  }

  .lamp.flat {
    width: 9px;
    height: 5px;
  }

  .scroll {
    display: grid;
    grid-template-columns: 15px 1fr 15px;
    min-width: 0;
    background: #f8f8f8;
  }

  .scroll input {
    appearance: none;
    height: 100%;
    border: 0;
    background: #f8f8f8;
  }

  .scroll input::-webkit-slider-thumb {
    appearance: none;
    width: 15px;
    height: 16px;
    border: 1px solid;
    border-color: #fff #808080 #808080 #fff;
    background: #efefef;
  }

  .scroll.idle input::-webkit-slider-thumb {
    visibility: hidden;
  }

  /* chart text */
  .axis {
    font-size: 10px;
  }

  .freq {
    font-size: 9px;
  }

  .navy {
    fill: #10106a;
    font-size: 10px;
  }

  .tiny {
    font-size: 8px;
    fill: #000;
  }

  .compass {
    fill: #101090;
    font-size: 12px;
  }

  .level,
  .ids {
    fill: #d8e4e0;
    font-size: 8px;
  }

  .place {
    fill: #202090;
    font-size: 12px;
  }

  .station {
    fill: #103c64;
    font-size: 11px;
  }

  .cross {
    fill: #787878;
    font-size: 10px;
  }

  .ylabel {
    fill: #606060;
    font-size: 10px;
  }

  .tag {
    fill: #10107a;
    font-size: 11px;
  }

  .note {
    fill: #10107a;
    font-size: 10px;
  }

  .side {
    fill: #10107a;
    font-size: 10px;
  }

  .small-note {
    fill: #10105a;
    font-size: 8px;
  }

  .km {
    font-size: 8px;
  }

  /* info window */
  .info .client {
    padding: 0 8px 0 27px;
    background: #c2dcc2;
  }

  .readings {
    display: grid;
    grid-template-columns: 74px 36px 264px 1fr;
    grid-template-rows: 25px 16px 16px 16px;
    align-items: center;
  }

  .readings > span {
    grid-column: 1;
    justify-self: end;
    white-space: nowrap;
  }

  .readings > .low {
    align-self: end;
    line-height: 16px;
  }

  .readings > .lamp {
    margin: 8px 0 0 13px;
  }

  .freq-row,
  .band {
    display: grid;
    grid-column: 3 / 5;
    align-items: center;
    font-size: 9px;
  }

  .freq-row {
    grid-template-columns: 1fr 34px;
    gap: 15px;
  }

  .freq-row .big {
    text-align: right;
  }

  .band {
    grid-template-columns: 60px 60px 1fr;
    text-align: center;
  }

  .band .big {
    text-align: left;
  }

  .actions {
    display: grid;
    grid-template-columns: 67px 66px 62px 1fr 61px 51px 28px;
    align-items: center;
    height: 25px;
    padding-right: 9px;
  }

  .actions .btn {
    height: 24px;
  }

  .actions .btn:not(.small) {
    font-size: 10px;
  }

  /* main window */
  .tools,
  .lengths,
  .source,
  .zoombar,
  .motion {
    display: grid;
    align-items: center;
  }

  .tools {
    grid-template-columns: 71px 62px 68px 26px 70px 26px 44px 28px 28px 54px 16px 28px 114px 28px 1fr 61px 116px;
    height: 26px;
    border-bottom: 1px solid #808080;
  }

  .tools .btn {
    height: 22px;
  }

  .clock {
    background: #000;
    color: #30c840;
    font-size: 11px;
    line-height: 18px;
    text-align: center;
    white-space: nowrap;
  }

  .route {
    display: flex;
    height: 56px;
    border-bottom: 1px solid #808080;
  }

  .nav {
    display: grid;
    grid-template-columns: repeat(4, 20px) 84px;
    grid-template-rows: repeat(3, 18px);
    padding: 1px 0 0 1px;
  }

  .facts {
    display: grid;
    flex: 1;
    grid-template-columns: 35px 178px 1fr;
    grid-template-rows: repeat(3, 18px);
    align-items: center;
    padding-top: 1px;
    font-size: 9px;
  }

  .facts b {
    color: #10107a;
    font-size: 13px;
    white-space: nowrap;
  }

  .facts .num {
    padding-right: 4px;
    text-align: right;
  }

  .path {
    display: grid;
    grid-template-columns: 1fr 27px;
    gap: 3px;
    align-items: center;
  }

  .path input {
    height: 15px;
    background: #b8b8b8;
    color: #10107a;
    text-align: left;
  }

  .path .btn {
    height: 20px;
  }

  .fact-two,
  .fact-three {
    display: grid;
    grid-template-columns: 228px 30px 1fr;
    align-items: center;
    white-space: nowrap;
  }

  .fact-three {
    grid-template-columns: 31px 20px 127px 177px 24px 1fr;
  }

  .lengths {
    grid-template-columns: 23px 23px 1fr 50px 54px 50px 54px 50px 54px;
    height: 21px;
    border-bottom: 2px solid #f4f4f4;
    padding-right: 4px;
  }

  .lengths .btn {
    height: 20px;
  }

  .lengths .scroll {
    margin: 0 2px;
  }

  .panel {
    width: 100%;
    box-sizing: border-box;
    border-top: 1px solid #909090;
    background: #f0f0f0;
  }

  .chart {
    margin-top: 4px;
    padding-top: 3px;
    border-top: 2px solid #a0a0a0;
    background: #fff;
  }

  .legend {
    display: grid;
    grid-template-columns: repeat(4, 144px);
    grid-auto-rows: 11px;
    padding-left: 134px;
  }

  .legend label {
    display: flex;
    align-items: center;
    gap: 4px;
    white-space: nowrap;
  }

  .plot {
    overflow: visible;
    width: 100%;
  }

  .source {
    grid-template-columns: 152px 29px 32px 48px 40px 34px 35px 34px 36px 34px 34px 34px 34px 1fr 60px 5px 36px 36px 35px;
    height: 29px;
    border-top: 2px solid #909090;
  }

  .source .btn {
    height: 26px;
  }

  .stack {
    display: flex;
    flex-direction: column;
    justify-content: flex-end;
    padding-right: 2px;
  }

  .stack .cap {
    line-height: 9px;
  }

  .stack .field,
  .stack input {
    height: 17px;
    line-height: 16px;
  }

  .code {
    align-items: center;
  }

  .code input {
    width: 28px;
  }

  .field.name {
    font-size: 12px;
    font-weight: normal;
  }

  .field.sip {
    font-size: 14px;
  }

  .pick {
    display: flex;
    position: relative;
    min-width: 0;
    padding: 0 2px;
  }

  .pick select {
    appearance: none;
    height: 17px;
    padding-left: 2px;
    color: #10107a;
    font-size: 9px;
    text-align: left;
  }

  .pick .btn {
    position: absolute;
    top: 1px;
    right: 3px;
    width: 14px;
    height: 15px;
    pointer-events: none;
  }

  .zoombar {
    grid-template-columns: 21px 36px 22px 22px 1fr;
    height: 21px;
    margin-top: 1px;
    border-top: 1px solid #909090;
    background: #f0f0f0;
  }

  .zoombar .btn {
    height: 18px;
    color: #b0b0b0;
    font-size: 8px;
  }

  .zoombar .scroll {
    margin-left: 2px;
  }

  .motion {
    grid-template-columns: 46px 46px 46px 36px 14px 71px 40px 74px 22px 38px 32px 138px 56px 50px 42px 50px 46px 1fr;
    height: 31px;
    border-bottom: 1px solid #f0f0f0;
  }

  .motion .btn {
    height: 20px;
  }

  .motion .go {
    gap: 4px;
  }

  .motion input {
    height: 17px;
    background: #b8b8b8;
  }

  .status {
    display: flex;
    align-items: flex-end;
    justify-content: flex-end;
    height: 16px;
  }

  /* GPS window */
  .gps-bar {
    display: grid;
    grid-template-columns: 54px 22px 22px 34px 44px 116px 40px 26px 42px 27px 45px 27px 64px 15px 22px 1fr 50px 24px;
    align-items: center;
    height: 27px;
    border-bottom: 1px solid #909090;
  }

  .gps-bar .btn {
    height: 22px;
  }

  .gps-body {
    display: grid;
    grid-template-columns: 1fr 226px;
    height: 340px;
    background: #fffcf2;
  }

  .map {
    width: 100%;
  }

  .sats {
    background: #a8cbf2;
  }

  .sky-row {
    display: grid;
    grid-template-columns: 179px 19px;
    gap: 3px;
    align-items: start;
    padding: 2px 0 3px 23px;
  }

  .close-sats {
    height: 20px;
  }

  .bars {
    width: 222px;
    margin-left: 3px;
  }

  .counts {
    display: grid;
    grid-template-columns: 46px 27px 1fr 27px;
    gap: 4px;
    align-items: center;
    padding: 2px 20px 0 18px;
  }

  .factors {
    padding: 4px 0;
    line-height: 8px;
  }

  .dops {
    display: grid;
    grid-template-columns: 30px 27px 30px 27px 30px 27px;
    gap: 3px;
    align-items: center;
    padding-left: 18px;
    font-size: 9px;
  }

  /* scan window */
  .scan-grid {
    display: grid;
    grid-template-columns: 1fr 118px;
    grid-template-rows: 121px 337px;
  }

  .spectrum,
  .volume > svg {
    width: 100%;
  }

  .spectrum {
    align-self: start;
  }

  .volume {
    display: grid;
    overflow: hidden;
    border-top: 1px solid #f0f0f0;
  }

  .volume > * {
    grid-area: 1 / 1;
  }

  .scan-set {
    display: grid;
    grid-template-columns: 1fr 20px 24px;
    grid-template-rows: 22px 30px 20px 20px 20px;
    align-content: start;
    align-items: center;
    padding: 1px 4px 0 1px;
    border-left: 2px solid #e8e8e8;
  }

  .scan-set .cap {
    grid-column: 1 / 3;
  }

  .scan-set label.cap {
    grid-column: 1;
  }

  .scan-set .btn {
    justify-self: end;
    width: 20px;
    height: 20px;
  }

  .scan-set .wide {
    grid-column: 2 / 4;
    height: 16px;
  }

  .channels {
    align-self: start;
    width: 108px;
    margin: 2px 0 0 3px;
    padding-top: 37px;
    background: #fffcf2;
  }

  .channels label {
    display: grid;
    grid-template-columns: 12px 8px 1fr;
    gap: 3px;
    align-items: center;
    height: 11px;
    padding-left: 3px;
    border-top: 1px dotted #d8d8c8;
    font-size: 8px;
  }

  .channels i {
    height: 12px;
  }

  .scan-tools {
    display: flex;
    flex-direction: column;
    padding: 5px 2px 0 1px;
    border-top: 1px solid #f0f0f0;
    border-left: 2px solid #e8e8e8;
  }

  .toggles {
    display: grid;
    gap: 1px;
    width: 65px;
    margin: 0 auto 11px;
  }

  .toggles .btn {
    gap: 2px;
    height: 22px;
    font-size: 8px;
    line-height: 10px;
  }

  .toggles .icon + span {
    font-size: 7px;
    line-height: 9px;
  }

  .scan-tools .scroll {
    height: 15px;
    margin: 0 3px 12px;
  }

  .scan-tools h2 {
    margin: 0 0 3px;
    font-size: 10px;
    line-height: 12px;
    font-weight: normal;
    text-align: center;
    white-space: nowrap;
  }

  .limits {
    display: grid;
    grid-template-columns: 1fr 1fr;
    row-gap: 1px;
  }

  .spin {
    display: grid;
    grid-template-columns: 31px 14px;
    align-items: center;
    justify-content: center;
  }

  .spin input {
    height: 16px;
    background: #ffffe4;
  }

  .spin .btn {
    width: 14px;
    height: 14px;
  }
</style>
